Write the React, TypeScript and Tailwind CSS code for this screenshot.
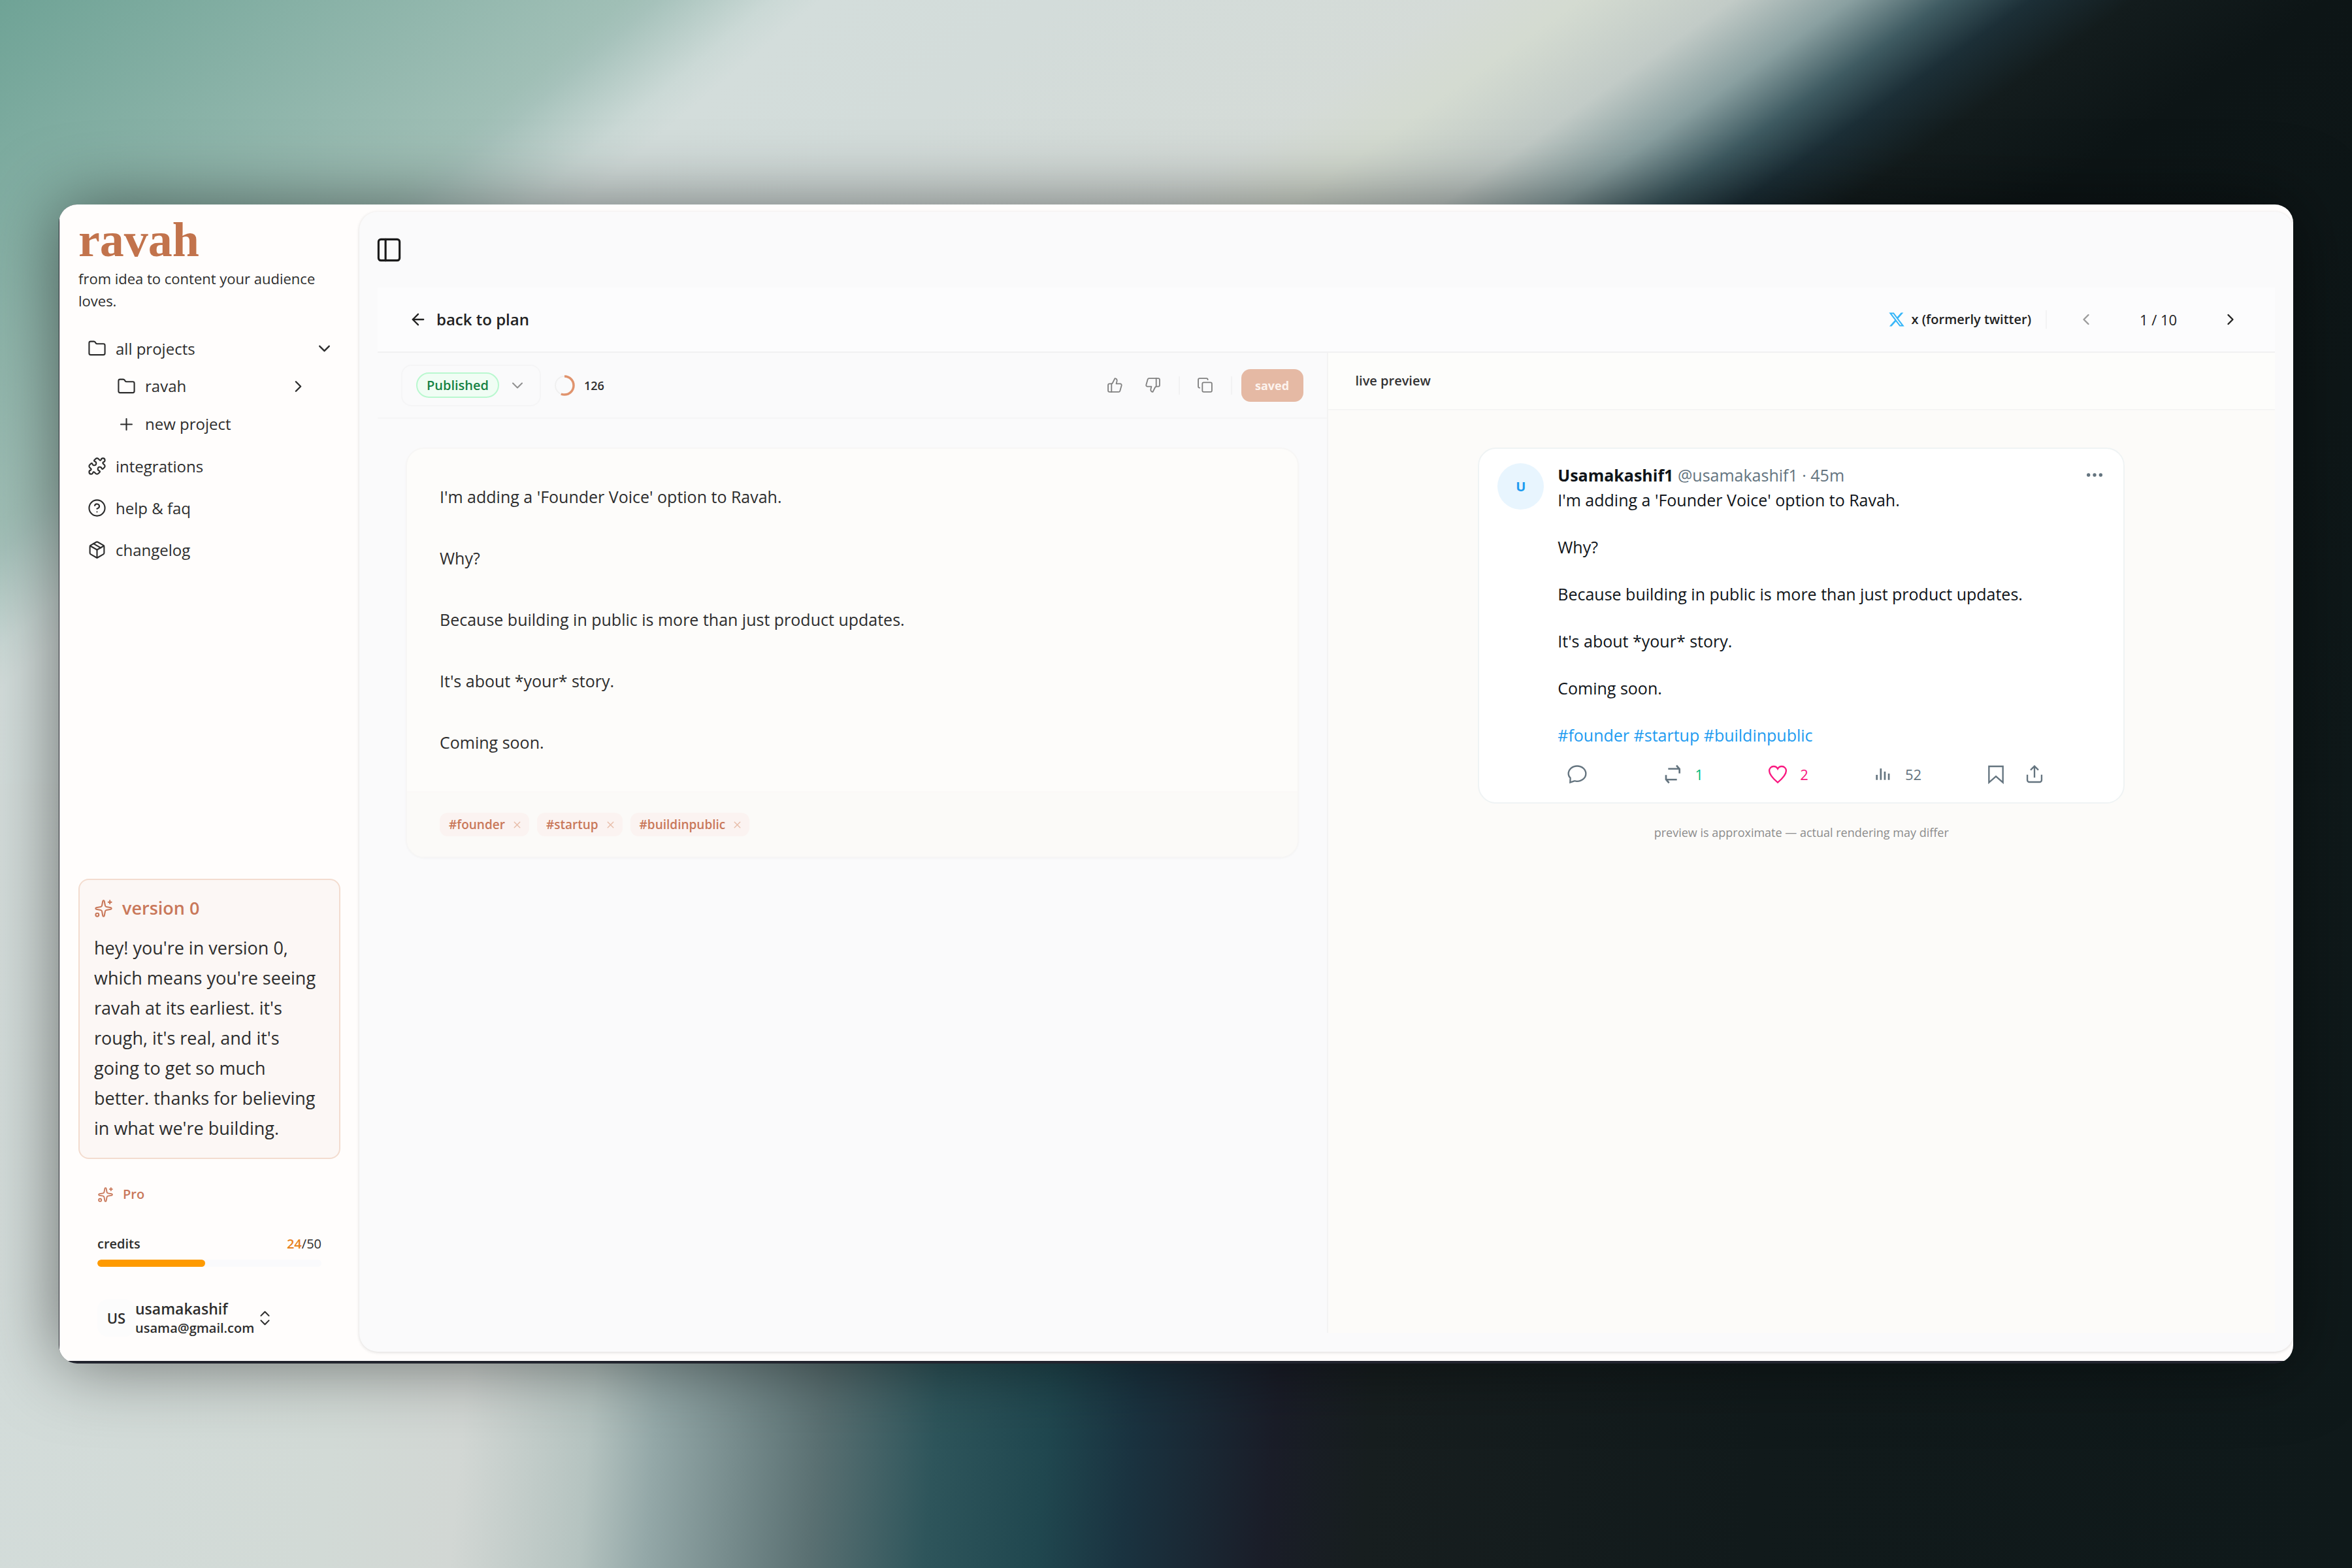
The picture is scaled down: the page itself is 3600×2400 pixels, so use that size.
import type { ReactNode } from "react";
import {
  ArrowLeft,
  ChevronDown,
  ChevronLeft,
  ChevronRight,
  ChevronsUpDown,
  CircleQuestionMark,
  Copy,
  Ellipsis,
  Folder,
  Package,
  PanelLeft,
  Plus,
  Puzzle,
  Sparkles,
  ThumbsDown,
  ThumbsUp,
  X,
} from "lucide-react";
import { FaXTwitter } from "react-icons/fa6";

const POST = [
  "I'm adding a 'Founder Voice' option to Ravah.",
  "Why?",
  "Because building in public is more than just product updates.",
  "It's about *your* story.",
  "Coming soon.",
].join("\n\n");

const TAGS = ["founder", "startup", "buildinpublic"];

const CREDITS = { used: 24, total: 50 };

function Wallpaper() {
  return (
    <div className="absolute inset-0 grid grid-rows-2" aria-hidden="true">
      <div className="bg-[linear-gradient(140deg,#6fa396_0%,#a0bfb6_19%,#a6c2bb_20%,#cbd9d6_23.5%,#d3dddb_25%,#d3dcda_32%,#d5dbd7_46%,#d5dbd7_100%)]">
        <div className="h-full bg-[linear-gradient(145deg,#d4dbd100_42%,#d4dbd1_45.5%,#c2cbc7_49.9%,#8aa0a1_53.3%,#3f5b62_56.1%,#1c2f37_58.5%,#131c1d_61.5%,#0d1516_67%,#0f191a_100%)]" />
      </div>
      <div className="bg-[linear-gradient(95deg,#d3dcda_0%,#d2dad6_16%,#d2d7d4_21.4%,#b5c3c0_26.7%,#94a8a8_29.4%,#5a7072_36.2%,#2e555b_41%,#20474f_45.6%,#1a3340_49.1%,#1a1d28_55%,#171e1f_59%,#111a1b_75%,#0f191a_100%)]" />
    </div>
  );
}

function NavItem({
  icon,
  label,
  trailing,
  nested,
}: {
  icon: ReactNode;
  label: string;
  trailing?: ReactNode;
  nested?: boolean;
}) {
  return (
    <a
      href="#"
      className={
        nested
          ? "flex h-[58px] items-center gap-3.5 pl-[59px] pr-[50px]"
          : "flex h-[57px] items-center gap-3.5 pl-3.5 pr-2.5"
      }
    >
      {icon}
      <span className="flex-1">{label}</span>
      {trailing}
    </a>
  );
}

function Sidebar() {
  const icon = "size-[29px] shrink-0";
  return (
    <aside className="flex w-[459px] shrink-0 flex-col px-[29px] pb-9 pt-3.5 text-[#2d2d2d]">
      <div className="font-['Liberation_Serif',serif] text-[74px] font-bold leading-[80px] text-[#c2734c]">ravah</div>
      <p className="pt-0.5 text-[22px] leading-[34px]">from idea to content your audience loves.</p>

      <nav className="mt-7 flex flex-col gap-[7px] text-2xl leading-8">
        <div>
          <NavItem
            icon={<Folder className={icon} strokeWidth={1.75} />}
            label="all projects"
            trailing={<ChevronDown className={icon} />}
          />
          <NavItem
            nested
            icon={<Folder className={icon} strokeWidth={1.75} />}
            label="ravah"
            trailing={<ChevronRight className={icon} />}
          />
          <NavItem nested icon={<Plus className={icon} strokeWidth={1.75} />} label="new project" />
        </div>
        <NavItem icon={<Puzzle className={icon} strokeWidth={1.75} />} label="integrations" />
        <NavItem icon={<CircleQuestionMark className={icon} strokeWidth={1.75} />} label="help & faq" />
        <NavItem icon={<Package className={icon} strokeWidth={1.75} />} label="changelog" />
      </nav>

      <section className="mt-auto rounded-2xl border-2 border-[#f3dccf] bg-[#fcf7f5] px-[22px] pb-[22px] pt-5">
        <h2 className="flex h-[46px] items-center gap-3.5 text-[27px] font-semibold text-[#c9785a]">
          <Sparkles className={icon} strokeWidth={1.75} />
          version 0
        </h2>
        <p className="mt-[15px] text-[27px] leading-[46px]">
          hey! you're in version 0, which means you're seeing ravah at its earliest. it's rough, it's real, and it's
          going to get so much better. thanks for believing in what we're building.
        </p>
      </section>

      <div className="mt-9 flex h-9 items-center gap-3.5 px-[29px] text-xl font-semibold text-[#c9785a]">
        <Sparkles className="size-[25px]" strokeWidth={1.75} />
        Pro
      </div>

      <div className="mt-[42px] px-[29px] text-xl leading-8">
        <div className="flex justify-between">
          <span className="font-semibold">credits</span>
          <span className="font-medium">
            <span className="font-semibold text-[#e8821e]">{CREDITS.used}</span>/{CREDITS.total}
          </span>
        </div>
        <div className="mt-2 h-[11px] overflow-hidden rounded-full bg-[#fafafc]">
          <div
            className="h-full rounded-full bg-[#fe9a00]"
            style={{ width: `${(CREDITS.used / CREDITS.total) * 100}%` }}
          />
        </div>
      </div>

      <button type="button" className="mt-12 flex items-center px-[29px] text-left">
        <span className="grid h-[57px] w-[58px] place-items-center rounded-2xl bg-[#fcfcfc] text-[22px] font-semibold">
          US
        </span>
        <span className="flex flex-col font-semibold leading-8">
          <span className="text-[23px]">usamakashif</span>
          <span className="text-xl leading-7">usama@gmail.com</span>
        </span>
        <ChevronsUpDown className="ml-0.5 size-[29px]" strokeWidth={1.75} />
      </button>
    </aside>
  );
}

function PageHeader() {
  return (
    <header className="flex h-[100px] items-center justify-between border-b-2 border-[#f1f1f2] bg-[#fcfcfd] px-12">
      <a href="#" className="flex items-center gap-3.5 text-2xl font-semibold text-[#222]">
        <ArrowLeft className="size-7" />
        back to plan
      </a>
      <div className="flex items-center text-[#222]">
        <FaXTwitter className="size-[26px] text-[#38b6f8]" />
        <span className="ml-2.5 text-xl font-semibold">x (formerly twitter)</span>
        <span className="ml-[22px] h-7 w-0.5 bg-[#f3f3f4]" />
        <button type="button" aria-label="previous" className="ml-10 grid size-10 place-items-center text-[#9a9a9a]">
          <ChevronLeft className="size-7" />
        </button>
        <span className="w-[181px] text-center text-[22px]">1 / 10</span>
        <button type="button" aria-label="next" className="grid size-10 place-items-center">
          <ChevronRight className="size-7" />
        </button>
      </div>
    </header>
  );
}

function Toolbar() {
  return (
    <div className="flex h-[101px] items-center border-b-2 border-[#f5f5f6] px-9">
      <label className="flex h-16 items-center rounded-2xl border-2 border-[#f5f5f6] pl-[21px] pr-5">
        <select
          aria-label="status"
          defaultValue="Published"
          className="h-[39px] w-[127px] appearance-none rounded-full border-2 border-[#b9f8cf] bg-[#f0fdf4] text-center text-xl font-semibold leading-8 text-[#168243]"
        >
          <option>Published</option>
        </select>
        <ChevronDown className="ml-3.5 size-7 text-[#8f8f8f]" strokeWidth={1.75} />
      </label>

      <svg className="ml-5 size-8" viewBox="0 0 32 32" fill="none" strokeWidth="3.5">
        <circle cx="16" cy="16" r="14" stroke="#f0f0f0" strokeWidth="2" />
        <circle cx="16" cy="16" r="14" stroke="#e0936d" pathLength="100" strokeDasharray="56 100" transform="rotate(-90 16 16)" />
      </svg>
      <span className="ml-3.5 text-lg font-semibold text-[#2d2d2d]">126</span>

      <div className="ml-auto flex items-center text-[#808080]">
        <button type="button" aria-label="like" className="grid size-[58px] place-items-center">
          <ThumbsUp className="size-[25px]" strokeWidth={1.75} />
        </button>
        <button type="button" aria-label="dislike" className="grid size-[58px] place-items-center">
          <ThumbsDown className="size-[25px]" strokeWidth={1.75} />
        </button>
        <span className="ml-2.5 h-7 w-0.5 bg-[#f2f2f3]" />
        <button type="button" aria-label="copy" className="ml-2.5 grid size-[58px] place-items-center">
          <Copy className="size-[25px]" strokeWidth={1.75} />
        </button>
        <span className="ml-2.5 h-7 w-0.5 bg-[#f2f2f3]" />
        <button
          type="button"
          className="ml-3.5 h-[50px] w-[95px] rounded-[14px] bg-[#e5b9a4] text-lg font-bold text-[#fdf3ee]"
        >
          saved
        </button>
      </div>
    </div>
  );
}

function Editor() {
  return (
    <section className="flex min-w-0 flex-[1453] flex-col">
      <Toolbar />
      <div className="px-[43px] pt-11">
        <div className="overflow-hidden rounded-[28px] border-2 border-[#f7f6f5] bg-[#fdfcfa] shadow-[0_1px_3px_rgba(0,0,0,0.03)]">
          <div className="px-[50px] pb-[51px] pt-[50px]">
            <textarea
              aria-label="post"
              rows={9}
              defaultValue={POST}
              className="block w-full resize-none overflow-hidden bg-transparent text-[25px] leading-[47px] text-[#2d2d2d] outline-none"
            />
          </div>
          <div className="flex gap-3 border-t-2 border-[#fbf8f7] bg-[#fbfaf8] px-[50px] pb-[31px] pt-[31px]">
            {TAGS.map((tag) => (
              <span
                key={tag}
                className="flex h-9 items-center gap-2.5 rounded-xl bg-[#fbf3f1] pl-3.5 pr-2.5 text-[19px] font-semibold text-[#c9785a]"
              >
                #{tag}
                <button type="button" aria-label={`remove ${tag}`} className="text-[#e8bda9]">
                  <X className="size-[17px]" />
                </button>
              </span>
            ))}
          </div>
        </div>
      </div>
    </section>
  );
}

function TweetIcon({ children }: { children: ReactNode }) {
  return (
    <svg viewBox="0 0 24 24" className="size-8" fill="none" stroke="currentColor" strokeWidth="1.75">
      {children}
    </svg>
  );
}

function TweetActions() {
  const action = "flex items-center gap-[18px]";
  return (
    <div className="ml-3.5 mt-6 flex w-[732px] items-center justify-between text-[22px] leading-9 text-[#64747f]">
      <button type="button" aria-label="reply" className="pr-4">
        <TweetIcon>
          <path d="M4 21.5l.2-5.2C2.8 15 2 13.4 2 11.5 2 6.5 6.5 2.6 12 2.6s10 3.9 10 8.8-4.5 8.7-10 8.7c-1.200 0-2-.6-3.200-.3z" />
        </TweetIcon>
      </button>
      <button type="button" aria-label="repost" className={action}>
        <TweetIcon>
          <path d="M7 5.800h12.500M16.500 2 20 6v5M17 18.200H4.500M8 22l-3.500-4v-5" strokeWidth="2" />
        </TweetIcon>
        <span className="text-[#00ba7c]">1</span>
      </button>
      <button type="button" aria-label="like" className={`${action} text-[#f91880]`}>
        <TweetIcon>
          <path d="M12 21.500C5.500 16 2.300 12 2.300 8A5 5 0 0 1 7.300 3C9.500 3 11 4 12 5.800 13 4 14.500 3 16.700 3a5 5 0 0 1 5 5c0 4-3.200 8-9.700 13.500z" />
        </TweetIcon>
        <span>2</span>
      </button>
      <button type="button" aria-label="views" className={action}>
        <TweetIcon>
          <path d="M5 12.800V18.500M9.600 5.500v13M14.200 9v9.500M18.800 11.200v7.300" strokeWidth="2" />
        </TweetIcon>
        <span>52</span>
      </button>
      <div className="flex gap-[27px]">
        <button type="button" aria-label="bookmark">
          <TweetIcon>
            <path d="M4 3h16v18.500l-8-7-8 7z" />
          </TweetIcon>
        </button>
        <button type="button" aria-label="share">
          <TweetIcon>
            <path d="M12 16V3M7.500 7.200 12 2.700l4.500 4.500M3.800 12.500v6.200A2.300 2.300 0 0 0 6.100 21h11.800a2.300 2.300 0 0 0 2.300-2.300v-6.200" />
          </TweetIcon>
        </button>
      </div>
    </div>
  );
}

function Preview() {
  return (
    <section className="flex min-w-0 flex-[1450] flex-col border-l-2 border-[#f3f3f3] bg-[#fcfbf9]">
      <h2 className="flex h-[88px] items-center border-b-2 border-[#f5f5f4] bg-[#fdfdfb] px-[42px] text-xl font-semibold text-[#333]">
        live preview
      </h2>
      <div className="flex flex-col items-center pt-[57px]">
        <article className="flex w-[990px] gap-[21px] rounded-[28px] border-2 border-[#eff3f4] bg-white px-7 pb-[25px] pt-[22px]">
          <div className="grid size-[71px] shrink-0 place-items-center rounded-full bg-[#e8f5fe] text-xl font-bold text-[#1d9bf0]">
            U
          </div>
          <div className="flex-1 text-[25px] leading-9 text-[#0f1419]">
            <div className="flex items-center justify-between">
              <div>
                <span className="font-bold">Usamakashif1</span> <span className="text-[#64747f]">@usamakashif1 · 45m</span>
              </div>
              <button type="button" aria-label="more" className="text-[#64747f]">
                <Ellipsis className="size-8" />
              </button>
            </div>
            <p className="mt-0.5 whitespace-pre-line">
              {POST}
              {"\n\n"}
              {TAGS.map((tag) => (
                <span key={tag}>
                  <a href="#" className="text-[#1d9bf0]">
                    #{tag}
                  </a>{" "}
                </span>
              ))}
            </p>
            <TweetActions />
          </div>
        </article>
        <p className="mt-7 text-lg leading-8 text-[#8c8c8c]">preview is approximate — actual rendering may differ</p>
      </div>
    </section>
  );
}

export default function App() {
  return (
    <div className="relative flex min-h-screen px-[90px] py-[313px] font-['Open_Sans',sans-serif]">
      <Wallpaper />
      <div className="relative flex flex-1 overflow-hidden rounded-[28px] bg-[#22242e] pb-1 pl-px shadow-[0_0_110px_rgba(0,0,0,0.5)]">
        <div className="flex flex-1 bg-[#fffdfc]">
          <Sidebar />
          <main className="mb-3.5 mt-[11px] flex min-w-0 flex-1 flex-col rounded-[28px] bg-[#fafafb] px-7 pb-[29px] shadow-[0_1px_5px_rgba(0,0,0,0.14)]">
            <div className="flex h-[116px] items-center">
              <button type="button" aria-label="toggle sidebar" className="-ml-1">
                <PanelLeft className="size-[43px] text-[#1a1a1a]" strokeWidth={1.75} />
              </button>
            </div>
            <PageHeader />
            <div className="flex flex-1">
              <Editor />
              <Preview />
            </div>
          </main>
        </div>
      </div>
    </div>
  );
}
